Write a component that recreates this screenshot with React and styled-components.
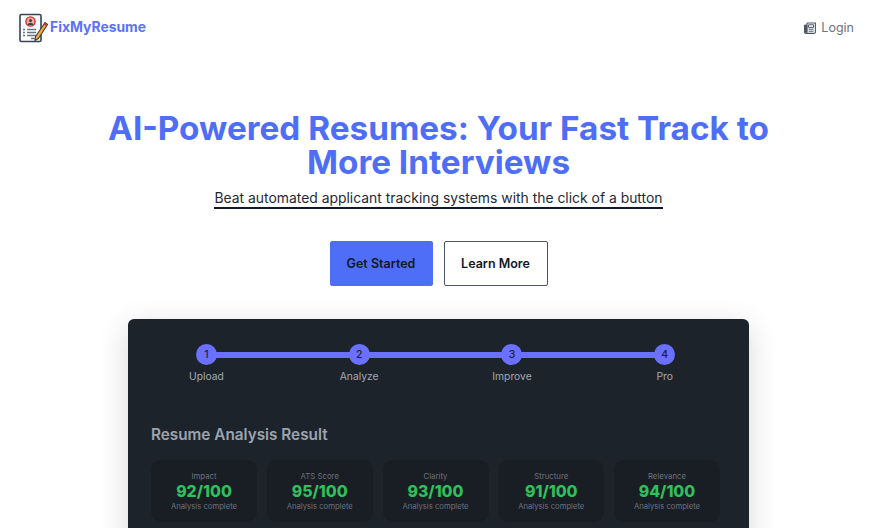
import React from "react";
import styled, { createGlobalStyle } from "styled-components";

const Global = createGlobalStyle`
  html, body { margin: 0; padding: 0; background: #fff; height: 100%; overflow: hidden; }
  body { font-family: Inter, "Liberation Sans", sans-serif; }
`;
const Page = styled.div`width: 877px; height: 528px; overflow: hidden; display: flex; flex-direction: column; align-items: center;`;
const Nav = styled.nav`
  flex: none; width: 100%; box-sizing: border-box; height: 55px; padding: 0 23px 0 19px;
  display: flex; align-items: center; justify-content: space-between;
`;
const Brand = styled.div`display: flex; align-items: center; gap: 2px;`;
const BrandName = styled.span`font-size: 13.9px; font-weight: 700; color: #5b73f5; line-height: 17px;`;
const LoginLink = styled.a`display: flex; align-items: center; gap: 5px; font-size: 12.5px; color: #6b7280; line-height: 17px;`;
const Hero = styled.section`
  flex: none; display: flex; flex-direction: column; align-items: center; padding-top: 56px;
`;
const Title = styled.h1`
  margin: 0; font-size: 33.3px; line-height: 34px; font-weight: 650; color: #4f6ef7; text-align: center; width: 700px;
`;
const Subtitle = styled.p`
  margin: 10px 0 0; font-size: 13.9px; line-height: 18px; color: #1f2937; border-bottom: 2px solid #111827;
`;
const Actions = styled.div`display: flex; gap: 11px; margin-top: 32px;`;
const Button = styled.button`
  width: ${p => p.$w}px; height: 45px; box-sizing: border-box; font: 600 12.5px Inter, sans-serif; color: #111827;
  border-radius: 2px; background: ${p => p.$primary ? "#4f6ef7" : "#fff"};
  border: 1px solid ${p => p.$primary ? "#4f6ef7" : "#4b5563"};
`;
const Panel = styled.section`
  margin-top: 33px; width: 621px; height: 260px; box-sizing: border-box; flex: none;
  background: #1d232b; border-radius: 6px; padding: 25px 0 0 0;
  box-shadow: 0 8px 30px rgba(0,0,0,.16);
`;
const Stepper = styled.ol`
  list-style: none; margin: 0; padding: 0 0 0 2px; display: grid; grid-template-columns: repeat(4, 152.8px);
`;
const Step = styled.li`
  position: relative; display: flex; flex-direction: column; align-items: center; gap: 4px;
  &:not(:last-child)::after {
    content: ""; position: absolute; left: 50%; width: 100%; top: 8px; height: 5.5px; background: #6a70ff;
  }
`;
const Dot = styled.span`
  position: relative; z-index: 1; width: 21px; height: 21px; border-radius: 50%; background: #6a70ff; color: #1d232b;
  display: flex; align-items: center; justify-content: center; font-size: 10.5px; font-weight: 500;
`;
const StepLabel = styled.span`font-size: 10.3px; line-height: 14px; color: #a3a9b3;`;
const Section = styled.div`padding: 42px 23px 0;`;
const SectionTitle = styled.h2`margin: 0 0 16px; font-size: 15.3px; line-height: 19px; font-weight: 600; color: #9ca3af;`;
const Cards = styled.div`display: grid; grid-template-columns: repeat(5, 106px); column-gap: 9.75px;`;
const Card = styled.div`
  height: 62px; border-radius: 10px; background: #191d24; display: flex; flex-direction: column; align-items: center; padding-top: 11px; box-sizing: border-box;
`;
const CardLabel = styled.span`font-size: 7.8px; line-height: 11px; color: #6b7280;`;
const Score = styled.span`font-size: 15.8px; line-height: 19px; font-weight: 800; color: #2fbf5b;`;
const CardNote = styled.span`font-size: 7.7px; line-height: 11px; color: #6b7280;`;

const Logo = () => (
  <svg width="29" height="30" viewBox="0 0 29 30" fill="none">
    <rect x="1" y="1.5" width="21" height="27" rx="1.5" fill="#fff" stroke="#374151" strokeWidth="1.6" />
    <circle cx="11.5" cy="8.5" r="4.6" fill="#f3a9a0" stroke="#c2352b" strokeWidth="1.4" />
    <circle cx="11.5" cy="7.6" r="1.5" fill="#374151" />
    <path d="M8.6 12a3 3 0 0 1 5.8 0" fill="#374151" />
    <path d="M4 16.5h2M8 16.5h9M4 19.5h2M8 19.5h9M4 22.5h2M8 22.5h9M12 25.5h4" stroke="#6b7280" strokeWidth="1.3" />
    <path d="M26 9.5 L28.5 11.5 L19.5 25.5 L16 27.5 L16.6 23.5 Z" fill="#f2a83b" stroke="#3b3f46" strokeWidth="1.1" strokeLinejoin="round" />
    <path d="M25.2 10.7 L27.8 12.6" stroke="#c2352b" strokeWidth="1.4" />
  </svg>
);

const NewsIcon = () => (
  <svg width="12" height="12" viewBox="0 0 12 12" fill="none" stroke="#4b5563">
    <path d="M3 1h8.4v9a1.4 1.4 0 0 1-1.4 1.4H2A1.4 1.4 0 0 1 .6 10V3.2H3" strokeWidth="1.1" />
    <path d="M3 1v9.4" strokeWidth="1.1" />
    <path d="M.6 3.2v7.4h2.4V3.2z" fill="#4b5563" strokeWidth=".4" />
    <path d="M4.6 2.8h5v2.6h-5z" strokeWidth="1" />
    <path d="M4.6 7.2h5M4.6 9.2h5" strokeWidth="1" />
  </svg>
);

const steps = ["Upload", "Analyze", "Improve", "Pro"];
const cards = [["Impact", "92/100"], ["ATS Score", "95/100"], ["Clarity", "93/100"], ["Structure", "91/100"], ["Relevance", "94/100"]];

export default function App() {
  return (
    <Page>
      <Global />
      <Nav>
        <Brand><Logo /><BrandName>FixMyResume</BrandName></Brand>
        <LoginLink><NewsIcon />Login</LoginLink>
      </Nav>
      <Hero>
        <Title>AI-Powered Resumes: Your Fast Track to More Interviews</Title>
        <Subtitle>Beat automated applicant tracking systems with the click of a button</Subtitle>
        <Actions>
          <Button $primary $w={103}>Get Started</Button>
          <Button $w={104}>Learn More</Button>
        </Actions>
      </Hero>
      <Panel>
        <Stepper>
          {steps.map((s, i) => (
            <Step key={s}><Dot>{i + 1}</Dot><StepLabel>{s}</StepLabel></Step>
          ))}
        </Stepper>
        <Section>
          <SectionTitle>Resume Analysis Result</SectionTitle>
          <Cards>
            {cards.map(([l, v]) => (
              <Card key={l}><CardLabel>{l}</CardLabel><Score>{v}</Score><CardNote>Analysis complete</CardNote></Card>
            ))}
          </Cards>
        </Section>
      </Panel>
    </Page>
  );
}
